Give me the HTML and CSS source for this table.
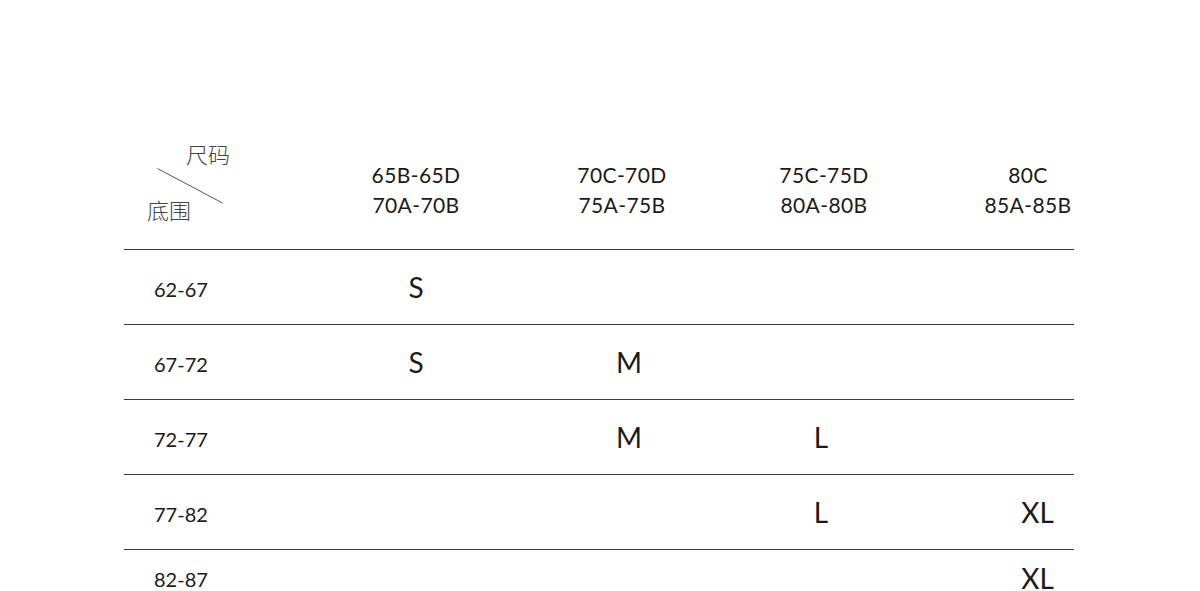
FILE: index.html
```html
<!DOCTYPE html>
<html lang="zh">
<head>
<meta charset="utf-8">
<title>尺码表</title>
<link rel="stylesheet" href="styles.css">
</head>
<body>
<div class="sheet">
  <div class="row head">
    <div class="corner">
      <span class="corner-top">尺码</span>
      <svg class="corner-line" width="66" height="36" viewBox="0 0 66 36"><line x1="0.5" y1="0.5" x2="65.5" y2="35" stroke="#555" stroke-width="1"/></svg>
      <span class="corner-bottom">底围</span>
    </div>
    <div class="hcell c1">65B-65D<br>70A-70B</div>
    <div class="hcell c2">70C-70D<br>75A-75B</div>
    <div class="hcell c3">75C-75D<br>80A-80B</div>
    <div class="hcell c4">80C<br>85A-85B</div>
  </div>
  <div class="row">
    <div class="label">62-67</div>
    <div class="size s1">S</div>
    <div class="size s2"></div>
    <div class="size s3"></div>
    <div class="size s4"></div>
  </div>
  <div class="row">
    <div class="label">67-72</div>
    <div class="size s1">S</div>
    <div class="size s2">M</div>
    <div class="size s3"></div>
    <div class="size s4"></div>
  </div>
  <div class="row">
    <div class="label">72-77</div>
    <div class="size s1"></div>
    <div class="size s2">M</div>
    <div class="size s3">L</div>
    <div class="size s4"></div>
  </div>
  <div class="row">
    <div class="label">77-82</div>
    <div class="size s1"></div>
    <div class="size s2"></div>
    <div class="size s3">L</div>
    <div class="size s4">XL</div>
  </div>
  <div class="row last">
    <div class="label">82-87</div>
    <div class="size s1"></div>
    <div class="size s2"></div>
    <div class="size s3"></div>
    <div class="size s4">XL</div>
  </div>
</div>
</body>
</html>
```

FILE: styles.css
```css
* { box-sizing: border-box; }
html, body { margin: 0; padding: 0; background: #fff; }
body {
  font-family: "Lato", "Noto Sans CJK SC", sans-serif;
  color: #1a1a1a;
  overflow: hidden;
  height: 591px;
}
.sheet {
  width: 950px;
  margin-left: 124px;
  padding-top: 129px;
}
.row {
  display: grid;
  grid-template-columns: 206px 172px 240px 164px 168px;
  height: 75px;
  border-bottom: 1px solid #3a3a3a;
  align-items: center;
}
.row.head { height: 121px; }
.row.last {
  border-bottom: none;
  height: 41px;
  padding-bottom: 2px;
  align-items: end;
}
.corner {
  align-self: start;
  display: flex;
  flex-direction: column;
  align-items: flex-start;
  padding-left: 23px;
  padding-top: 12px;
  font-family: "Noto Sans CJK SC", sans-serif;
  font-size: 22px;
  line-height: 24px;
  color: #444;
  font-weight: 300;
}
.corner-top { margin-left: 39px; }
.corner-line { display: block; margin-left: 10px; margin-top: 3px; }
.corner-bottom { margin-top: -7px; }
.hcell {
  text-align: center;
  font-size: 21px;
  letter-spacing: 0.4px;
  line-height: 30px;
  padding-top: 2px;
}
.hcell.c4 { padding-left: 76px; }
.label {
  padding-left: 30px;
  font-size: 20px;
  line-height: 20px;
  padding-top: 4px;
}
.size {
  text-align: center;
  font-size: 28px;
  line-height: 22px;
  padding-top: 0;
}
.size.s2 { padding-left: 14px; }
.size.s3 { padding-right: 6px; }
.size.s4 { padding-left: 95px; }
```
